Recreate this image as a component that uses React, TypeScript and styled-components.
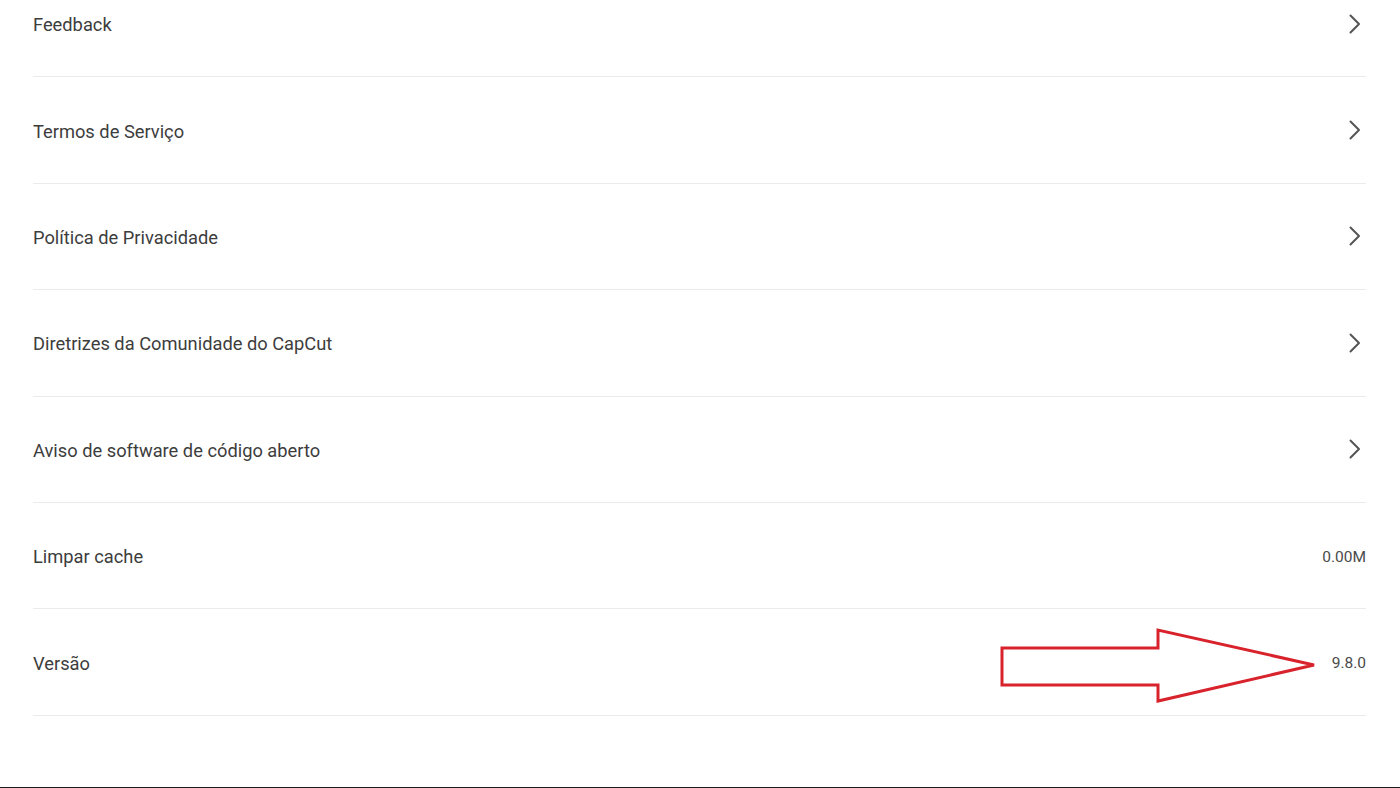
import React, { FC } from "react";
import styled, { createGlobalStyle } from "styled-components";

const GlobalStyle = createGlobalStyle`
  html, body {
    margin: 0;
    padding: 0;
    background: #ffffff;
  }
  body {
    font-family: Roboto, "Noto Sans", "Liberation Sans", sans-serif;
    -webkit-font-smoothing: antialiased;
  }
`;

interface Item {
  label: string;
  value?: string;
}

const items: Item[] = [
  { label: "Feedback" },
  { label: "Termos de Serviço" },
  { label: "Política de Privacidade" },
  { label: "Diretrizes da Comunidade do CapCut" },
  { label: "Aviso de software de código aberto" },
  { label: "Limpar cache", value: "0.00M" },
  { label: "Versão", value: "9.8.0" },
];

const Chevron: FC = () => (
  <ChevronIcon width="12" height="20" viewBox="0 0 12 20">
    <path d="M1.5 1.5 L10 10 L1.5 18.5" fill="none" stroke="#555555" strokeWidth="2" strokeLinecap="round" strokeLinejoin="round" />
  </ChevronIcon>
);

const Arrow: FC = () => (
  <ArrowMark width="322" height="78" viewBox="0 0 322 78">
    <path
      d="M3 20 L159 20 L159 2 L315 37 L159 73 L159 57 L3 57 Z"
      fill="none"
      stroke="#d8222c"
      strokeWidth="3"
      strokeLinejoin="miter"
    />
  </ArrowMark>
);

export default function App() {
  return (
    <>
      <GlobalStyle />
      <Screen>
        <List>
          {items.map(item => (
            <Row key={item.label}>
              <Label>{item.label}</Label>
              {item.value ? <Value>{item.value}</Value> : <Chevron />}
            </Row>
          ))}
        </List>
        <Arrow />
      </Screen>
    </>
  );
}

const Screen = styled.div`
  position: relative;
  width: 1400px;
  height: 788px;
  overflow: hidden;
  background: #ffffff;
  border-bottom: 1px solid #1e1e1e;
  box-sizing: border-box;
`;

const List = styled.div`
  display: flex;
  flex-direction: column;
  margin: -29px 34px 0 33px;
`;

const Row = styled.div`
  display: flex;
  align-items: center;
  justify-content: space-between;
  height: 106.4px;
  box-sizing: border-box;
  padding-top: 2px;
  border-bottom: 1px solid #ebebeb;
`;

const Label = styled.span`
  font-size: 18.3px;
  color: #3d3d3d;
`;

const Value = styled.span`
  font-size: 15.5px;
  color: #4a4a4a;
`;

const ChevronIcon = styled.svg`
  margin-right: 5px;
  margin-bottom: 2px;
`;

const ArrowMark = styled.svg`
  position: absolute;
  left: 999px;
  top: 628px;
`;
